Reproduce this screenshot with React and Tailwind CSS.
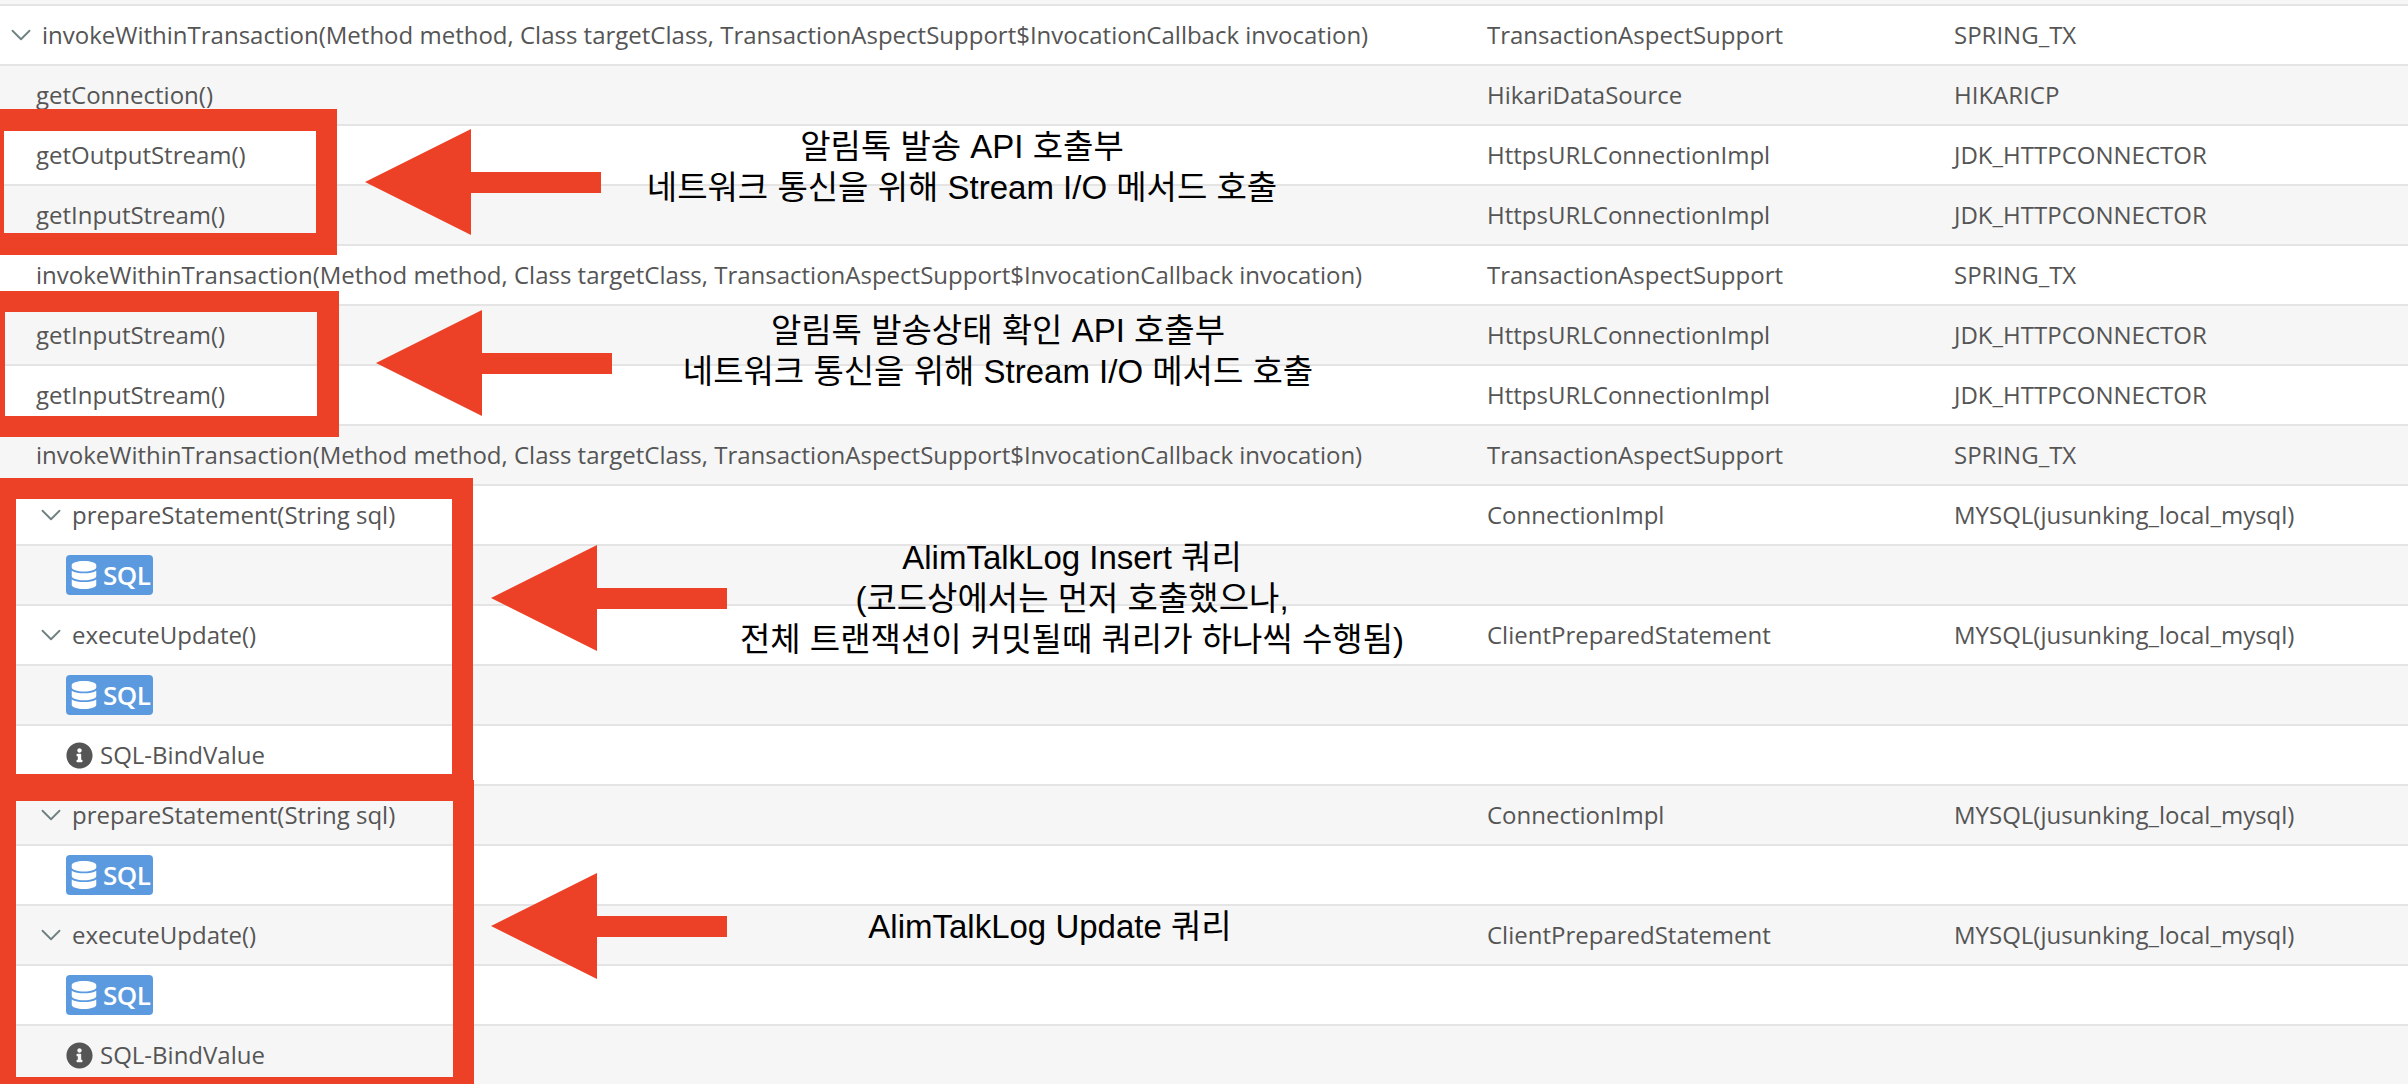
import { ChevronDown } from 'lucide-react';
import { FaDatabase, FaInfoCircle } from 'react-icons/fa';

const invoke = 'invokeWithinTransaction(Method method, Class targetClass, TransactionAspectSupport$InvocationCallback invocation)';
const tas = 'TransactionAspectSupport';
const http = 'HttpsURLConnectionImpl';
const jdk = 'JDK_HTTPCONNECTOR';
const conn = 'ConnectionImpl';
const stmt = 'ClientPreparedStatement';
const mysql = 'MYSQL(jusunking_local_mysql)';

const rows = [
  { name: invoke, cls: tas, cat: 'SPRING_TX', chevron: 'top' },
  { name: 'getConnection()', cls: 'HikariDataSource', cat: 'HIKARICP' },
  { name: 'getOutputStream()', cls: http, cat: jdk },
  { name: 'getInputStream()', cls: http, cat: jdk },
  { name: invoke, cls: tas, cat: 'SPRING_TX' },
  { name: 'getInputStream()', cls: http, cat: jdk },
  { name: 'getInputStream()', cls: http, cat: jdk },
  { name: invoke, cls: tas, cat: 'SPRING_TX' },
  { name: 'prepareStatement(String sql)', cls: conn, cat: mysql, chevron: 'nested' },
  { sql: true },
  { name: 'executeUpdate()', cls: stmt, cat: mysql, chevron: 'nested' },
  { sql: true },
  { bind: true },
  { name: 'prepareStatement(String sql)', cls: conn, cat: mysql, chevron: 'nested' },
  { sql: true },
  { name: 'executeUpdate()', cls: stmt, cat: mysql, chevron: 'nested' },
  { sql: true },
  { bind: true },
];

function SqlBadge() {
  return (
    <span className="ml-[66px] flex h-10 w-[87px] items-center gap-[5px] rounded-[4px] bg-[#5c9ae0] pl-1 text-white">
      <FaDatabase className="text-[28px]" />
      <span className="text-[26px] font-semibold tracking-[-0.5px]">SQL</span>
    </span>
  );
}

function NameCell({ row }) {
  if (row.sql) return <SqlBadge />;
  if (row.bind) {
    return (
      <span className="ml-[66px] flex items-center gap-[7px]">
        <FaInfoCircle className="text-[27px]" />
        SQL-BindValue
      </span>
    );
  }
  if (row.chevron === 'top') {
    return (
      <span className="ml-1 flex items-center gap-1">
        <ChevronDown size={34} strokeWidth={1.3} className="text-[#6f8080]" />
        {row.name}
      </span>
    );
  }
  if (row.chevron === 'nested') {
    return (
      <span className="ml-[34px] flex items-center gap-1">
        <ChevronDown size={34} strokeWidth={1.3} className="text-[#6f8080]" />
        {row.name}
      </span>
    );
  }
  return <span className="ml-9">{row.name}</span>;
}

function Row({ row, odd }) {
  return (
    <div className={`flex h-[60px] items-center border-b-2 border-[#e4e4e4] ${odd ? 'bg-[#f6f6f6]' : 'bg-white'}`}>
      <div className="w-[1487px] shrink-0 whitespace-nowrap">
        <NameCell row={row} />
      </div>
      <div className="w-[467px] shrink-0">{row.cls}</div>
      <div>{row.cat}</div>
    </div>
  );
}

// 빨간 화살표: 끝점 기준 좌표
function Arrow({ className }) {
  return (
    <svg className={`absolute h-[106px] w-[236px] ${className}`} viewBox="0 0 236 106">
      <path d="M0 53 L106 0 V43 H236 V64 H106 V106 Z" fill="#ec4126" />
    </svg>
  );
}

function Note({ className, lines }) {
  return (
    <div className={`absolute -translate-x-1/2 text-center font-['Liberation_Sans','Noto_Sans_CJK_KR',sans-serif] text-[33px] leading-[41px] whitespace-nowrap text-black ${className}`}>
      {lines.map((l) => (
        <div key={l}>{l}</div>
      ))}
    </div>
  );
}

export default function App() {
  return (
    <div className="relative h-[1084px] w-[2408px] overflow-hidden bg-white font-['Open_Sans',sans-serif] text-[24px] text-[#555]">
      <div className="h-[6px] border-b-2 border-[#e4e4e4] bg-[#f6f6f6]" />
      {rows.map((row, i) => (
        <Row key={i} row={row} odd={i % 2 === 1} />
      ))}

      {/* 강조 박스 */}
      <div className="absolute top-[109px] left-0 h-[146px] w-[337px] border-t-[22px] border-r-[21px] border-b-[22px] border-l-[4px] border-[#ec4126]" />
      <div className="absolute top-[291px] left-0 h-[146px] w-[339px] border-t-[21px] border-r-[22px] border-b-[21px] border-l-[5px] border-[#ec4126]" />
      <div className="absolute top-[478px] left-0 h-[317px] w-[473px] border-t-[21px] border-r-[21px] border-b-[21px] border-l-[16px] border-[#ec4126]" />
      <div className="absolute top-[780px] left-0 h-[318px] w-[474px] border-t-[21px] border-r-[21px] border-b-[21px] border-l-[16px] border-[#ec4126]" />

      <Arrow className="top-[129px] left-[365px]" />
      <Arrow className="top-[310px] left-[376px]" />
      <Arrow className="top-[545px] left-[491px]" />
      <Arrow className="top-[873px] left-[491px]" />

      <Note className="top-[126px] left-[962px]" lines={['알림톡 발송 API 호출부', '네트워크 통신을 위해 Stream I/O 메서드 호출']} />
      <Note className="top-[310px] left-[998px]" lines={['알림톡 발송상태 확인 API 호출부', '네트워크 통신을 위해 Stream I/O 메서드 호출']} />
      <Note className="top-[537px] left-[1072px]" lines={['AlimTalkLog Insert 쿼리', '(코드상에서는 먼저 호출했으나,', '전체 트랜잭션이 커밋될때 쿼리가 하나씩 수행됨)']} />
      <Note className="top-[906px] left-[1050px]" lines={['AlimTalkLog Update 쿼리']} />
    </div>
  );
}
